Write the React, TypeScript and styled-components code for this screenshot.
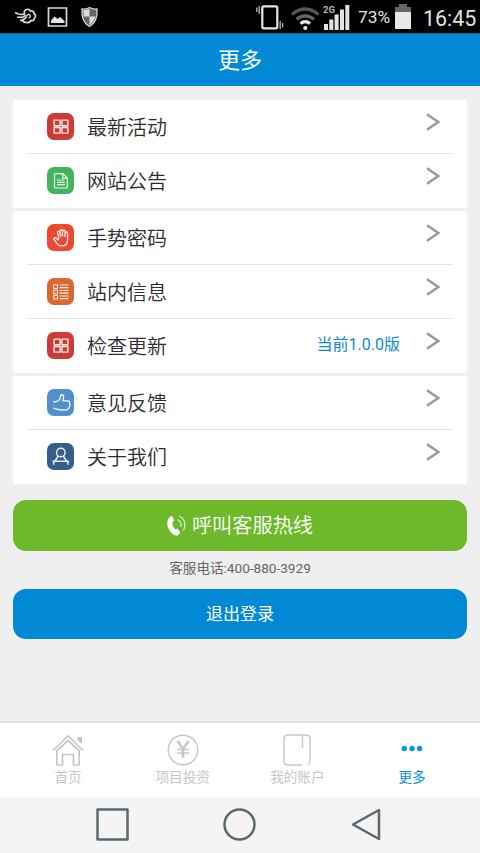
import React from 'react';
import styled, { createGlobalStyle } from 'styled-components';

const GlobalStyle = createGlobalStyle`
  *, *::before, *::after { box-sizing: border-box; }
  body { margin: 0; background: #efefef; }
  svg { display: block; flex: none; overflow: visible; }
  button { border: 0; padding: 0; font: inherit; cursor: pointer; }
`;

const Screen = styled.div`
  width: 480px;
  height: 853px;
  display: flex;
  flex-direction: column;
  overflow: hidden;
  background: #efefef;
  font-family: Roboto, 'Noto Sans CJK SC', sans-serif;
`;

const StatusBar = styled.div`
  height: 33px;
  flex: none;
  display: flex;
  align-items: center;
  justify-content: space-between;
  background: #000;
  color: #e2e2e2;
  padding: 0 4px 0 14px;
`;

const StatusGroup = styled.div`
  display: flex;
  align-items: center;
  height: 33px;
`;

const Battery = styled.span`
  font-size: 17.3px;
  line-height: 33px;
  width: 31px;
  margin: 2px 6px 0 8px;
  white-space: nowrap;
`;

const Clock = styled.span`
  font-size: 21.4px;
  line-height: 33px;
  width: 53px;
  margin: 3px 0 0 12px;
  white-space: nowrap;
`;

const Header = styled.header`
  height: 53px;
  flex: none;
  display: flex;
  align-items: center;
  justify-content: center;
  padding-top: 1px;
  background: #0189d5;
  border-top: 1px solid #0a6ba5;
  color: #fff;
  font-size: 22px;
  line-height: 30px;
`;

const Content = styled.main`
  flex: 1;
  min-height: 0;
  padding: 14px 13px 0;
  display: flex;
  flex-direction: column;
`;

const MenuGroups = styled.div`
  display: flex;
  flex-direction: column;
  gap: 3px;
`;

const Card = styled.section`
  background: #fff;
  padding: 0 14px;
`;

const Row = styled.div`
  height: 54px;
  display: flex;
  align-items: center;
  padding: 0 13px 0 19.5px;

  & + & { box-shadow: 0 -1px 0 #e4e4e4; }
`;

const Tile = styled.span`
  margin-bottom: 1px;
`;

const Label = styled.span`
  flex: 1;
  margin: 2px 0 0 13.5px;
  font-size: 20px;
  font-weight: 350;
  line-height: 28px;
  color: #2c2c2c;
`;

const Version = styled.span`
  font-size: 16px;
  line-height: 24px;
  margin: 0 26px 3px 0;
  color: #0b8bd6;
`;

const ChevronSlot = styled.span`
  margin-bottom: 10px;
`;

const CallButton = styled.button`
  height: 51px;
  flex: none;
  margin-top: 16px;
  display: flex;
  align-items: center;
  justify-content: center;
  gap: 4px;
  border-radius: 13px;
  background: #6eb92b;
  color: #fff;
  font-size: 20.2px;
  font-weight: 350;
  line-height: 28px;
`;

const Hotline = styled.p`
  margin: 6px 0 0;
  height: 21px;
  text-align: center;
  font-size: 13.6px;
  line-height: 22px;
  color: #666;
`;

const LogoutButton = styled.button`
  height: 50px;
  flex: none;
  margin-top: 11px;
  padding-top: 1px;
  border-radius: 13px;
  background: #0189d5;
  color: #fff;
  font-size: 17px;
  line-height: 49px;
`;

const TabBar = styled.nav`
  height: 76px;
  flex: none;
  display: grid;
  grid-template-columns: repeat(4, 114.7px);
  justify-content: center;
  background: #fff;
  border-top: 2px solid #e3e3e3;
`;

const Tab = styled.div<{ $active?: boolean }>`
  display: flex;
  flex-direction: column;
  align-items: center;
  padding-top: 11px;
  gap: 1px;
  color: ${(p) => (p.$active ? '#0a8edb' : '#c6c6c6')};
  font-size: 13.6px;
  line-height: 20px;
`;

const SystemNav = styled.div`
  height: 56px;
  flex: none;
  display: flex;
  align-items: center;
  justify-content: center;
  gap: 94px;
  padding: 0 1px 1px 0;
  background: #f4f4f4;
`;

const tiles: Record<string, { color: string; art: React.ReactNode }> = {
  grid: {
    color: '#cb3c36',
    art: <path strokeWidth="1.4" d="M7.1 7.1h6v5.600h-6zM14.900 7.1h6v5.600h-6zM7.1 14.500h6v5.600h-6zM14.900 14.500h6v5.600h-6z" />,
  },
  doc: {
    color: '#43b45c',
    art: <path d="M8.500 6.600H16l4.300 4.300v9.200q0 .9-.9.9H8.500q-1 0-1-.9V7.500q0-.9 1-.9zM15.700 6.900v4.300h4.300M10 13h7.500M10 15.300h7.800M10 17.700h7.800" />,
  },
  hand: {
    color: '#ea4a2f',
    art: <path strokeWidth="1.4" d="M11.800 13.500L10.700 9q-.3-1.400.8-1.600t1.500 1.100l.8 4M13 8V6.900q0-1.300 1.200-1.300t1.300 1.300v5.400M15.600 7.200q.2-1.200 1.400-1t1.200 1.500l-.2 5M18.200 8.800q.2-1 1.300-.8t1.100 1.400l-.1 7q0 5.500-6 5.500-3 0-4.700-2.500l-2.700-4.100q-.6-1 .3-1.500t1.700.2l1.900 1.700.9-2.200" />,
  },
  list: {
    color: '#da6831',
    art: (
      <>
        <path strokeWidth="1" d="M6.700 6.700h3.800v3.800H6.700zM6.700 12h3.800v3.800H6.700zM6.700 17.300h3.800v3.800H6.700z" />
        <path d="M12.500 7h9M12.500 9.600h9M12.500 12.500h9M12.500 15.100h9M12.500 18h9M12.500 20.600h9" />
      </>
    ),
  },
  thumb: {
    color: '#5190cd',
    art: <path strokeWidth="1.4" d="M6.200 12.700q3.300.3 4.500-.7 2.500-1.500 2.700-4 0-2.600 1.500-2.500 2 .3 1.700 3-.2 2-.8 3.400l5.400.1q1.900.2 1.200 1.700 1.200.9.200 2.100.8 1.100-.4 2 .2 1.200-1 1.700-.2 1.400-2 1.500h-3.600q-5-.1-9.200-1.900" />,
  },
  person: {
    color: '#345f8b',
    art: (
      <>
        <circle cx="13.800" cy="9.500" r="4.300" strokeWidth="1.500" />
        <path strokeWidth="1.500" d="M11.300 13L7.300 19M16.300 13l4 6M5.500 18.200h16.600M6.700 18.200v3.600M20.900 18.200v3.600" />
      </>
    ),
  },
};

const TileIcon = ({ name }: { name: string }) => (
  <Tile>
    <svg width="27" height="27" viewBox="0 0 27 27" fill="none" stroke="#fff" strokeOpacity=".87" strokeWidth="1.2" strokeLinejoin="round">
      <rect width="27" height="27" rx="7" fill={tiles[name].color} stroke="none" />
      {tiles[name].art}
    </svg>
  </Tile>
);

const Chevron = () => (
  <ChevronSlot>
    <svg width="14" height="18" viewBox="0 0 14 18" fill="none" stroke="#999" strokeWidth="2.5">
      <path d="M1 1.300L12.300 9 1 16.700" />
    </svg>
  </ChevronSlot>
);

type Item = { icon: string; label: string; note?: string };

const groups: Item[][] = [
  [
    { icon: 'grid', label: '最新活动' },
    { icon: 'doc', label: '网站公告' },
  ],
  [
    { icon: 'hand', label: '手势密码' },
    { icon: 'list', label: '站内信息' },
    { icon: 'grid', label: '检查更新', note: '当前1.0.0版' },
  ],
  [
    { icon: 'thumb', label: '意见反馈' },
    { icon: 'person', label: '关于我们' },
  ],
];

const NotificationIcons = () => (
  <svg width="86" height="24" viewBox="14 5 86 24" fill="none" stroke="#d8d8d8" strokeWidth="1.700">
    <path d="M15 12.500q5 3 9.500 1.500-1-3.500 2-4.500 3-.8 4 1.500 3-.5 3.500 2.500 2.800 2 .5 4.500-.5 3-3.500 2.500-1.500 2.800-4.500 2-3 0-4.500-2.500M17 17q5.500 1.500 9-2M20 20.500q4.500-.5 6.500-4" />
    <path strokeWidth="1.400" d="M26.500 16.500q1.500-3 3.500-1.500 1 2.500-1.500 3" />
    <path d="M48.500 8h18v18h-18z" />
    <path fill="#e6e6e6" stroke="none" d="M51 23v-2.500l3.500-4 3 2.500 2.500-2 4.500 4V23z" />
    <path fill="#666" strokeWidth="1.300" d="M89.500 7.500q4 2 7.500 1.500 1 13-7.500 17.500Q81 22 82 9q4 .5 7.500-1.500z" />
    <path fill="#ddd" stroke="none" d="M83.300 10.300q3 0 6.200-1.300v7.500h-5.700zM89.500 16.500h5.700q-1 5.500-5.700 8.500z" />
  </svg>
);

const SignalIcons = () => (
  <svg width="94" height="28" viewBox="256 2 94 28" fill="none">
    <rect x="262.300" y="5.300" width="15" height="22" rx="1.500" stroke="#e6e6e6" strokeWidth="2.200" />
    <path stroke="#aaa" strokeWidth="1.400" d="M259.200 5v8M256.800 6.500v4.500M280.200 20v8M282.600 22v4.500" />
    <path stroke="#555" strokeWidth="3.200" d="M292 13.500q13-11 26.500 0" />
    <path stroke="#666" strokeWidth="3.200" d="M296.500 18.300q8.500-7 17.500 0" />
    <path stroke="#eee" strokeWidth="3.200" d="M300.500 22.600q4.700-4 9.500 0" />
    <circle cx="305.300" cy="27" r="2.100" fill="#eee" />
    <text x="323" y="12" fill="#bbb" fontFamily="Roboto" fontWeight="700" fontSize="9.500">2G</text>
    <path fill="#e3e3e3" d="M324 23h4v6h-4zM329.300 18.500h4V29h-4zM334.600 13.500h4V29h-4zM340 8.500h4V29h-4zM345.300 4h4v25h-4z" />
  </svg>
);

const BatteryIcon = () => (
  <svg width="16" height="25" viewBox="0 0 16 25">
    <path fill="#666" d="M4 0h8v3h4v5H0V3h4z" />
    <path fill="#e8e8e8" d="M0 8h16v17H0z" />
  </svg>
);

const PhoneIcon = () => (
  <svg width="21" height="22" viewBox="0 0 21 22" fill="none">
    <path fill="#fff" d="M3.500 1.500L5.300 1l2 4.500-2 1.400q-.3 3.500 2.900 7.600l2.300-.9 2.800 3.900-1.800 2.500q-3 1.800-6.500-1.500Q-2.500 10.500 1.500 3.500z" />
    <path stroke="#d8edc6" strokeWidth="1.300" d="M10.600 4.500q4.300 2.500 3.500 7.500M12.200 1q6.500 3.500 5.600 10.500-.4 2.300-1.600 4" />
  </svg>
);

const HomeIcon = () => (
  <svg width="32" height="32" viewBox="0 0 32 32" fill="none" stroke="#c6c6c6" strokeWidth="1.700">
    <path d="M1 16.500L16 2l15 14.500M4.800 16.700V31h5.700V20.500h11V31h5.700V16.700L16 6.500z" />
    <path fill="#c6c6c6" stroke="none" d="M25.500 3H30v6.500l-4.500-3z" />
  </svg>
);

const YenIcon = () => (
  <svg width="32" height="32" viewBox="0 0 32 32" fill="none" stroke="#c6c6c6">
    <circle cx="16" cy="16" r="14.800" strokeWidth="1.400" />
    <path strokeWidth="2.500" d="M10.500 7l5.500 8 5.500-8M16 15v8.500" />
    <path strokeWidth="1.700" d="M10 15.500h12M10 19h12" />
  </svg>
);

const AccountIcon = () => (
  <svg width="28" height="32" viewBox="0 0 28 32" fill="none" stroke="#c6c6c6" strokeWidth="1.400">
    <path d="M19 31H5q-4 0-4-4V5q0-4 4-4h18q4 0 4 4v21q0 4-2.300 4.700M19.500 1v13" />
  </svg>
);

const DotsIcon = () => (
  <svg width="22" height="32" viewBox="0 0 22 32" fill="#0c92e5">
    <circle cx="3.300" cy="14.500" r="2.700" />
    <circle cx="11.100" cy="14.500" r="2.700" />
    <circle cx="18.600" cy="14.500" r="2.700" />
  </svg>
);

const NavShape = ({ d, circle }: { d?: string; circle?: boolean }) => (
  <svg width="33" height="33" viewBox="0 0 33 33" fill="none" stroke="#5a6872" strokeWidth="2.500" strokeLinejoin="round">
    {circle ? <circle cx="16.500" cy="16.500" r="15" /> : <path d={d} />}
  </svg>
);

export default function App() {
  return (
    <Screen>
      <GlobalStyle />
      <StatusBar>
        <StatusGroup><NotificationIcons /></StatusGroup>
        <StatusGroup>
          <SignalIcons />
          <Battery>73%</Battery>
          <BatteryIcon />
          <Clock>16:45</Clock>
        </StatusGroup>
      </StatusBar>
      <Header>更多</Header>
      <Content>
        <MenuGroups>
          {groups.map((items, i) => (
            <Card key={i}>
              {items.map((item) => (
                <Row key={item.label}>
                  <TileIcon name={item.icon} />
                  <Label>{item.label}</Label>
                  {item.note && <Version>{item.note}</Version>}
                  <Chevron />
                </Row>
              ))}
            </Card>
          ))}
        </MenuGroups>
        <CallButton><PhoneIcon />呼叫客服热线</CallButton>
        <Hotline>客服电话:400-880-3929</Hotline>
        <LogoutButton>退出登录</LogoutButton>
      </Content>
      <TabBar>
        <Tab><HomeIcon />首页</Tab>
        <Tab><YenIcon />项目投资</Tab>
        <Tab><AccountIcon />我的账户</Tab>
        <Tab $active><DotsIcon />更多</Tab>
      </TabBar>
      <SystemNav>
        <NavShape d="M1.500 1.500h30v30h-30z" />
        <NavShape circle />
        <NavShape d="M29 2v29L3 16.500z" />
      </SystemNav>
    </Screen>
  );
}
